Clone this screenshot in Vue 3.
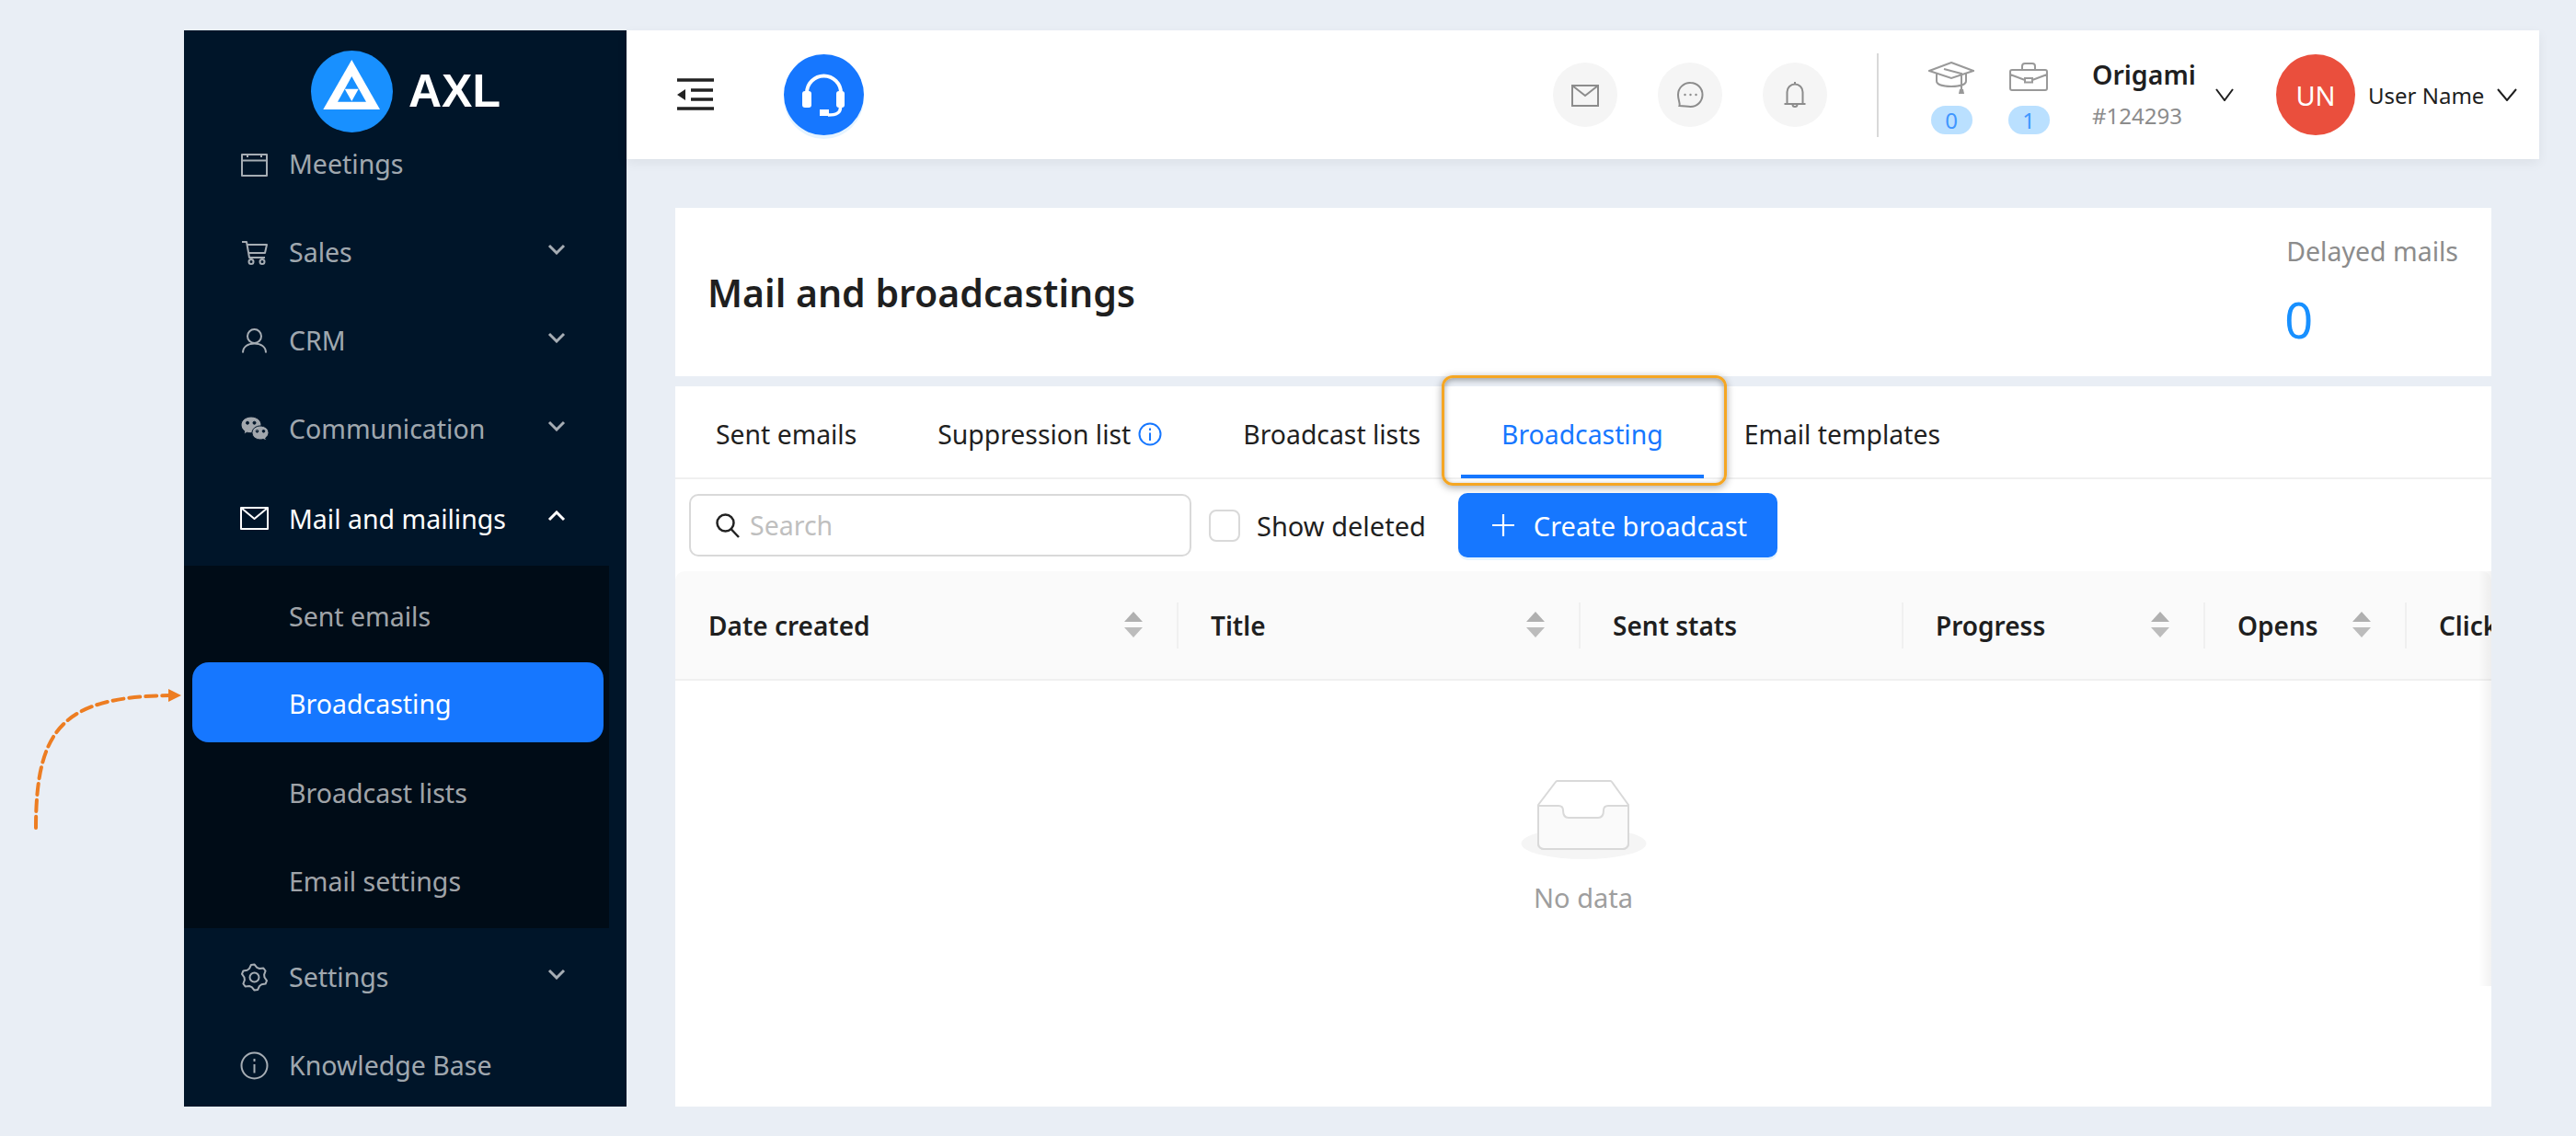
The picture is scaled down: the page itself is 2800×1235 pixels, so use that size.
<script setup>
const gearPath = (() => {
  // six lobes, same as the settings cog in the menu
  let d = ''
  const lobes = 6
  for (let i = 0; i < lobes * 4; i++) {
    const a = (i / (lobes * 4)) * Math.PI * 2 - Math.PI / 2 - Math.PI / 12
    const r = i % 4 === 0 || i % 4 === 1 ? 14 : 11
    d += (i ? 'L' : 'M') + (15.5 + r * Math.cos(a)).toFixed(1) + ' ' + (15.5 + r * Math.sin(a)).toFixed(1)
  }
  return d + 'Z'
})()

const icons = {
  meetings: [{ d: 'M2 5H29V28H2ZM2 11.5H29M8 4V8M23 4V8' }],
  cart: [{ d: 'M2 4H7L10 21H27M8 7H29L27 16H9.5' }, { d: 'M9.5 25.5a2.5 2.5 0 1 0 5 0a2.5 2.5 0 1 0-5 0ZM21.5 25.5a2.5 2.5 0 1 0 5 0a2.5 2.5 0 1 0-5 0Z' }],
  crm: [{ d: 'M8 10.5a7.5 7.5 0 1 0 15 0a7.5 7.5 0 1 0-15 0ZM3 28.5C3 22 8.5 18.5 15.5 18.5S28 22 28 28.5' }],
  wechat: [
    { d: 'M12 2C5.9 2 1 6 1 11c0 2.8 1.5 5 3.8 6.700L4 21l3.600-1.800c1.400.4 2.900.6 4.400.6C18.100 19.800 23 15.900 23 11S18.100 2 12 2ZM8 7.200a1.500 1.500 0 1 0 0 3a1.500 1.500 0 1 0 0-3ZM15.500 7.200a1.500 1.500 0 1 0 0 3a1.500 1.500 0 1 0 0-3Z', solid: true },
    { d: 'M22 12c-5 0-9 3.300-9 7.500S17 27 22 27c1.200 0 2.300-.2 3.300-.5L28.500 28l-.8-3c2-1.300 3.300-3.300 3.300-5.500C31 15.300 27 12 22 12ZM18.500 16.500a1.300 1.300 0 1 0 0 2.600a1.300 1.300 0 1 0 0-2.600ZM25.500 16.500a1.300 1.300 0 1 0 0 2.600a1.300 1.300 0 1 0 0-2.600Z', solid: true },
  ],
  mail: [{ d: 'M1 3H30V26H1ZM1 3L15.500 15L30 3' }],
  settings: [{ d: gearPath }, { d: 'M10.500 15.500a5 5 0 1 0 10 0a5 5 0 1 0-10 0Z' }],
  info: [{ d: 'M1.500 15.500a14 14 0 1 0 28 0a14 14 0 1 0-28 0ZM15.500 14V23.500M15.500 8V11' }],
}

const menuTop = [
  { label: 'Meetings', icon: 'meetings' },
  { label: 'Sales', icon: 'cart', arrow: true },
  { label: 'CRM', icon: 'crm', arrow: true },
  { label: 'Communication', icon: 'wechat', arrow: true },
]
const subItems = ['Sent emails', 'Broadcasting', 'Broadcast lists', 'Email settings']
const menuBottom = [
  { label: 'Settings', icon: 'settings', arrow: true },
  { label: 'Knowledge Base', icon: 'info' },
]

const tabs = ['Sent emails', 'Suppression list', 'Broadcast lists', 'Broadcasting', 'Email templates']

const columns = [
  { title: 'Date created', sort: true },
  { title: 'Title', sort: true },
  { title: 'Sent stats' },
  { title: 'Progress', sort: true },
  { title: 'Opens', sort: true },
  { title: 'Clicks' },
]
</script>

<template>
  <div class="page">
    <!-- annotation arrow pointing at the sidebar -->
    <svg class="arrow" width="210" height="160" viewBox="0 0 210 160">
      <path d="M39 150C39 40 70 8 184 6" fill="none" stroke="#ed7d22" stroke-width="4" stroke-dasharray="12 6" stroke-linecap="round" />
      <path d="M183 -1L197 6L183 13Z" fill="#ed7d22" />
    </svg>

    <aside class="sidebar">
      <div class="logo">
        <svg class="logo-mark" width="89" height="89" viewBox="0 0 89 89">
          <circle cx="44.500" cy="44.500" r="44.500" fill="#1890ff" />
          <path d="M44.300 10L75 64H13.300Z" fill="#fff" />
          <path d="M44.300 28L60 55.700H29Z" fill="#1890ff" />
          <path d="M36.700 41.700H51.700L44.300 55Z" fill="#fff" />
        </svg>
        <span class="logo-text">AXL</span>
      </div>

      <div v-for="item in menuTop" :key="item.label" class="menu-row">
        <svg class="ico" width="31" height="31" viewBox="0 0 31 31">
          <path v-for="(p, i) in icons[item.icon]" :key="i" :d="p.d" :class="{ solid: p.solid }" />
        </svg>
        <span>{{ item.label }}</span>
        <svg v-if="item.arrow" class="chev" width="20" height="12" viewBox="0 0 20 12"><path d="M2 2L10 10L18 2" /></svg>
      </div>

      <div class="menu-row open">
        <svg class="ico" width="31" height="31" viewBox="0 0 31 31">
          <path v-for="(p, i) in icons.mail" :key="i" :d="p.d" />
        </svg>
        <span>Mail and mailings</span>
        <svg class="chev" width="20" height="12" viewBox="0 0 20 12"><path d="M2 10L10 2L18 10" /></svg>
      </div>

      <div class="submenu">
        <div v-for="s in subItems" :key="s" class="sub-row" :class="{ active: s === 'Broadcasting' }">
          <span>{{ s }}</span>
        </div>
      </div>

      <div v-for="item in menuBottom" :key="item.label" class="menu-row">
        <svg class="ico" width="31" height="31" viewBox="0 0 31 31">
          <path v-for="(p, i) in icons[item.icon]" :key="i" :d="p.d" />
        </svg>
        <span>{{ item.label }}</span>
        <svg v-if="item.arrow" class="chev" width="20" height="12" viewBox="0 0 20 12"><path d="M2 2L10 10L18 2" /></svg>
      </div>
    </aside>

    <div class="main">
      <header class="topbar">
        <svg class="fold" width="40" height="36" viewBox="0 0 40 36">
          <path d="M0 2H40M15 13H39M15 23H39M0 33H40" stroke="#222" stroke-width="3.500" fill="none" />
          <path d="M0 18L9 12V24Z" fill="#222" />
        </svg>
        <div class="headset">
          <svg width="87" height="88" viewBox="0 0 87 88">
            <path d="M25 42A18.500 18.500 0 0 1 62 42" fill="none" stroke="#fff" stroke-width="4" />
            <rect x="20" y="40" width="10" height="18" rx="3" fill="#fff" />
            <rect x="57" y="40" width="9" height="18" rx="3" fill="#fff" />
            <path d="M61.500 58C61.500 64 57 66 48 66" fill="none" stroke="#fff" stroke-width="3.500" />
            <rect x="39" y="60" width="10" height="7" fill="#fff" />
          </svg>
        </div>

        <div class="round-btn">
          <svg width="30" height="30" viewBox="0 0 30 30"><path d="M1 5H29V27H1ZM1 5L15 16L29 5" /></svg>
        </div>
        <div class="round-btn">
          <svg width="30" height="30" viewBox="0 0 30 30">
            <path d="M15.500 2a13 13 0 0 1 0 26c-4 0-7-1-12-1c1-3-1.500-6-1.500-12A13 13 0 0 1 15.500 2Z" />
            <circle cx="9.500" cy="15" r="1.200" class="dot" />
            <circle cx="15.500" cy="15" r="1.200" class="dot" />
            <circle cx="21.500" cy="15" r="1.200" class="dot" />
          </svg>
        </div>
        <div class="round-btn">
          <svg width="30" height="30" viewBox="0 0 30 30"><path d="M6.500 25V12a8.500 8.500 0 0 1 17 0V25M3.500 25H26.500M15 1V4M12.500 25.500a2.500 2.500 0 0 0 5 0" /></svg>
        </div>

        <div class="vline"></div>

        <div class="counter">
          <svg width="50" height="38" viewBox="0 0 50 38">
            <path d="M25 1L49 10L25 18L1 10ZM9 13V21C9 25 16 27 25 27S41 25 41 21V13M17 8L36 13V31" />
            <path d="M34 30H38L39 35H33Z" class="solid-grey" />
          </svg>
          <span class="badge">0</span>
        </div>
        <div class="counter">
          <svg width="50" height="38" viewBox="0 0 50 38">
            <path d="M7 9H43a2 2 0 0 1 2 2V29a2 2 0 0 1-2 2H7a2 2 0 0 1-2-2V11a2 2 0 0 1 2-2ZM18 9V5a3 3 0 0 1 3-3H29a3 3 0 0 1 3 3V9M5 14L21 20M45 14L29 20M21 18H29V22.500H21Z" />
          </svg>
          <span class="badge">1</span>
        </div>

        <div class="org">
          <div class="org-name">Origami</div>
          <div class="org-id">#124293</div>
        </div>
        <svg class="vee org-vee" width="20" height="14" viewBox="0 0 20 14"><path d="M1 1L10 13L19 1" /></svg>
        <div class="avatar">UN</div>
        <span class="user">User Name</span>
        <svg class="vee" width="22" height="14" viewBox="0 0 22 14"><path d="M1 1L11 13L21 1" /></svg>
      </header>

      <div class="content">
        <section class="title-card">
          <h1>Mail and broadcastings</h1>
          <div class="delayed">
            <div class="delayed-label">Delayed mails</div>
            <div class="delayed-value">0</div>
          </div>
        </section>

        <section class="list-card">
          <div class="tabs">
            <div v-for="t in tabs" :key="t" class="tab" :class="{ current: t === 'Broadcasting' }">
              {{ t }}
              <svg v-if="t === 'Suppression list'" class="tab-info" width="26" height="26" viewBox="0 0 26 26">
                <circle cx="13" cy="13" r="11.500" fill="none" stroke="#1677ff" stroke-width="2" />
                <path d="M13 11.500V20M13 6.500V9" stroke="#1677ff" stroke-width="2" />
              </svg>
              <i v-if="t === 'Broadcasting'" class="callout"></i>
            </div>
          </div>

          <div class="toolbar">
            <div class="search">
              <svg width="28" height="28" viewBox="0 0 28 28" fill="none" stroke="#222" stroke-width="2.500">
                <circle cx="11.500" cy="11.500" r="9" /><path d="M17.500 18L26 27" />
              </svg>
              <span>Search</span>
            </div>
            <label class="check"><i></i>Show deleted</label>
            <button class="create">
              <svg width="24" height="24" viewBox="0 0 24 24"><path d="M12 0V24M0 12H24" stroke="#fff" stroke-width="2.200" /></svg>
              Create broadcast
            </button>
          </div>

          <div class="table">
            <div class="thead">
              <div v-for="c in columns" :key="c.title" class="th">
                <span>{{ c.title }}</span>
                <svg v-if="c.sort" class="sort" width="20" height="29" viewBox="0 0 20 29">
                  <path d="M10 0L20 11H0Z" fill="#b0b0b0" />
                  <path d="M0 17H20L10 28Z" fill="#bcbcbc" />
                </svg>
              </div>
            </div>
            <div class="empty">
              <svg width="137" height="87" viewBox="0 0 137 87">
                <ellipse cx="68.500" cy="70" rx="68" ry="17" fill="#f5f5f5" />
                <path d="M19 28L38 3a2 2 0 0 1 2-1H97a2 2 0 0 1 2 1L117 28V70a6 6 0 0 1-6 6H25a6 6 0 0 1-6-6Z" fill="#fff" stroke="#d9d9d9" stroke-width="2" stroke-linejoin="round" />
                <path d="M19 29H41c3 0 5 2 5 5c0 5 2 8 6 8H84c4 0 6-3 6-8c0-3 2-5 5-5H117V70a6 6 0 0 1-6 6H25a6 6 0 0 1-6-6Z" fill="#fafafa" stroke="#d9d9d9" stroke-width="2" stroke-linejoin="round" />
              </svg>
              <div class="empty-text">No data</div>
            </div>
            <div class="scroll-shadow"></div>
          </div>
        </section>
      </div>
    </div>
  </div>
</template>

<style scoped>
.page {
  position: relative;
  box-sizing: border-box;
  width: 2800px;
  height: 1235px;
  padding: 33px 40px 32px 200px;
  display: flex;
  overflow: hidden;
  background: #e9eef5;
  font-family: "Noto Sans", "Open Sans", sans-serif;
  color: #1f1f1f;
}

.arrow {
  position: absolute;
  left: 0;
  top: 750px;
  overflow: visible;
}

.sidebar {
  width: 481px;
  flex: none;
  overflow: hidden;
  background: #001529;
  color: rgba(255, 255, 255, 0.65);
  font-size: 28.500px;
}

.logo {
  height: 97px;
  padding-top: 22px;
  box-sizing: border-box;
  padding-left: 138px;
  display: flex;
  align-items: flex-start;
  gap: 17px;
}

.logo-mark {
  flex: none;
}

.logo-text {
  color: #fff;
  font-size: 50px;
  font-weight: 700;
  line-height: 89px;
  font-family: "Liberation Sans", sans-serif;
}

.menu-row {
  height: 96px;
  display: flex;
  align-items: center;
  padding-left: 61px;
  padding-right: 66px;
  gap: 22px;
}

.menu-row.open {
  margin-top: 2px;
  color: #fff;
}

.ico {
  flex: none;
  fill: none;
  stroke: currentColor;
  stroke-width: 2;
  stroke-linejoin: round;
}

.ico .solid {
  fill: #a2a7ad;
  stroke: #001529;
  stroke-width: 1;
  fill-rule: evenodd;
}

.chev {
  margin-left: auto;
  margin-top: -6px;
  fill: none;
  stroke: currentColor;
  stroke-width: 3;
}

.submenu {
  width: 462px;
  margin-top: 3px;
  margin-bottom: 5px;
  padding: 11.500px 0 7.500px;
  box-sizing: border-box;
  display: flex;
  flex-direction: column;
  gap: 9px;
  background: #000c17;
}

.sub-row {
  height: 87px;
  flex: none;
  margin: 0 6px 0 9px;
  padding-left: 105px;
  display: flex;
  align-items: center;
  border-radius: 18px;
}

.sub-row.active {
  margin-top: -2.500px;
  margin-bottom: 2.500px;
  padding-top: 3px;
  box-sizing: border-box;
  background: #1677ff;
  color: #fff;
}

.main {
  flex: 1;
  min-width: 0;
  display: flex;
  flex-direction: column;
}

.topbar {
  height: 140px;
  flex: none;
  display: flex;
  align-items: center;
  padding-left: 55px;
  background: #fff;
  box-shadow: 0 4px 12px rgba(0, 0, 0, 0.06);
}

.fold {
  flex: none;
}

.headset {
  width: 87px;
  height: 88px;
  margin-left: 76px;
  margin-right: 749px;
  border-radius: 50%;
  background: #1677ff;
  box-shadow: 0 4px 0 #e6f4ff;
}

.round-btn {
  width: 70px;
  height: 70px;
  margin-right: 44px;
  border-radius: 50%;
  display: flex;
  align-items: center;
  justify-content: center;
  background: #f5f5f5;
}

.round-btn svg {
  fill: none;
  stroke: #8c8c8c;
  stroke-width: 2;
}

.round-btn .dot {
  fill: #8c8c8c;
  stroke: none;
}

.vline {
  width: 2px;
  height: 91px;
  margin-left: 10px;
  margin-right: 54px;
  background: #d9d9d9;
}

.counter {
  width: 50px;
  margin-top: 3px;
  margin-right: 34px;
  display: flex;
  flex-direction: column;
  align-items: center;
  gap: 10px;
}

.counter svg {
  margin-top: 3px;
  fill: none;
  stroke: #999;
  stroke-width: 2;
}

.counter .solid-grey {
  fill: #999;
  stroke: none;
}

.badge {
  width: 45px;
  height: 31px;
  border-radius: 16px;
  background: #bae0ff;
  color: #4096ff;
  font-size: 24px;
  line-height: 31px;
  text-align: center;
}

.org {
  width: 134px;
  margin-left: 10px;
}

.org-name {
  font-size: 28.500px;
  font-weight: 600;
  line-height: 38px;
}

.org-id {
  margin-top: 8px;
  font-size: 24px;
  line-height: 36px;
  color: #8c8c8c;
}

.vee {
  flex: none;
  fill: none;
  stroke: #1f1f1f;
  stroke-width: 2;
}

.org-vee {
  margin-right: 46px;
}

.avatar {
  width: 86px;
  height: 88px;
  flex: none;
  border-radius: 50%;
  display: flex;
  align-items: center;
  justify-content: center;
  background: #ea4f3d;
  color: #fff;
  font-size: 29px;
}

.user {
  margin-left: 14px;
  margin-right: 14px;
  font-size: 24px;
}

.content {
  flex: 1;
  min-height: 0;
  display: flex;
  flex-direction: column;
  gap: 11px;
  padding: 53px 52px 0 53px;
}

.title-card {
  height: 183px;
  flex: none;
  display: flex;
  align-items: center;
  justify-content: space-between;
  padding: 0 36px 0 35px;
  background: #fff;
}

.title-card h1 {
  margin: 0;
  font-size: 41px;
  font-weight: 600;
}

.delayed-label {
  font-size: 28.500px;
  line-height: 40px;
  color: #8c8c8c;
}

.delayed-value {
  margin-top: 19px;
  margin-left: -2px;
  font-size: 54px;
  line-height: 70px;
  color: #1890ff;
}

.list-card {
  flex: 1;
  min-height: 0;
  background: #fff;
}

.tabs {
  height: 101px;
  display: flex;
  box-sizing: border-box;
  border-bottom: 2px solid #f0f0f0;
}

.tab {
  position: relative;
  height: 100px;
  flex: none;
  box-sizing: border-box;
  padding: 3px 44px 0;
  display: flex;
  align-items: center;
  gap: 8px;
  font-size: 28.350px;
}

.tab.current {
  color: #1677ff;
  box-shadow: inset 0 -4px 0 #1677ff;
}

.tab-info {
  flex: none;
}

.callout {
  position: absolute;
  left: -21px;
  right: -25px;
  top: -12px;
  bottom: -8px;
  border: 3px solid #f5a623;
  border-radius: 12px;
  box-shadow: 0 2px 8px rgba(0, 0, 0, 0.35), inset 0 2px 6px rgba(0, 0, 0, 0.35);
}

.toolbar {
  height: 70px;
  margin-top: 15px;
  margin-bottom: 15px;
  padding-left: 15px;
  display: flex;
  align-items: center;
}

.search {
  width: 546px;
  height: 68px;
  box-sizing: border-box;
  padding-left: 26px;
  display: flex;
  align-items: center;
  gap: 10px;
  border: 2px solid #d9d9d9;
  border-radius: 10px;
  color: #bfbfbf;
  font-size: 28.500px;
}

.check {
  margin-left: 19px;
  display: flex;
  align-items: center;
  gap: 18px;
  font-size: 29px;
}

.check i {
  width: 34px;
  height: 35px;
  box-sizing: border-box;
  border: 2px solid #d9d9d9;
  border-radius: 8px;
}

.create {
  height: 70px;
  width: 347px;
  margin-left: 35px;
  padding: 0 0 0 37px;
  display: flex;
  align-items: center;
  gap: 21px;
  border: 0;
  border-radius: 10px;
  background: #1677ff;
  color: #fff;
  font-family: inherit;
  font-size: 29px;
  box-shadow: 0 3px 0 #e6f4ff;
}

.table {
  position: relative;
  height: 451px;
  overflow: hidden;
}

.thead {
  display: grid;
  grid-template-columns: 545px 437px 351px 328px 219px 219px;
  height: 119px;
  box-sizing: border-box;
  background: #fafafa;
  border-bottom: 2px solid #f0f0f0;
  border-radius: 10px 10px 0 0;
}

.th {
  position: relative;
  display: flex;
  align-items: center;
  justify-content: space-between;
  padding: 0 37px 0 36px;
  font-size: 28px;
  font-weight: 600;
}

.th + .th {
  padding-left: 37px;
}

.th + .th::before {
  content: "";
  position: absolute;
  left: 0;
  top: 34px;
  height: 50px;
  width: 2px;
  background: #f0f0f0;
}

.sort {
  flex: none;
}

.empty {
  padding-top: 107px;
  display: flex;
  flex-direction: column;
  align-items: center;
}

.empty-text {
  margin-top: 22px;
  font-size: 29px;
  line-height: 40px;
  color: #9e9e9e;
}

.scroll-shadow {
  position: absolute;
  right: 0;
  top: 0;
  bottom: 0;
  width: 14px;
  background: linear-gradient(to left, rgba(0, 0, 0, 0.05), rgba(0, 0, 0, 0));
}
</style>
